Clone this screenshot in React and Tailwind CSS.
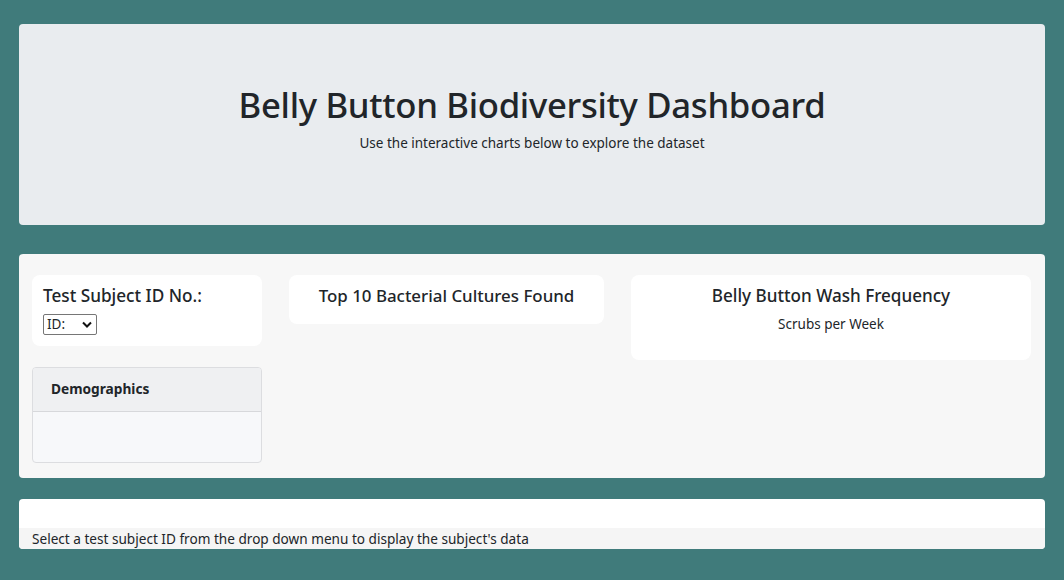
import React from "react";

export default function App() {
  const font = { fontFamily: '"Noto Sans", "Open Sans", sans-serif' };
  return (
    <div className="min-h-[580px] w-full bg-[#407b7b] pt-[24px] px-[19px] pb-[31px] text-[#212529]" style={font}>
      <div className="h-[201px] rounded bg-[#e9ecef] flex flex-col items-center pt-[59px]">
        <h1 className="text-[34.7px] leading-[44px] font-medium tracking-[-0.3px]">Belly Button Biodiversity Dashboard</h1>
        <p className="text-[13.5px] leading-[20px] mt-[6px]">Use the interactive charts below to explore the dataset</p>
      </div>

      <div className="mt-[29px] h-[224px] rounded bg-[#f7f7f7] pt-[21px] pl-[13px] pr-[14px] flex gap-[27px]">
        <div className="w-[230px] flex flex-col gap-[21px]">
          <div className="h-[71px] rounded-lg bg-white px-[11px] pt-[10px]">
            <div className="text-[17.2px] leading-[22px] font-medium">Test Subject ID No.:</div>
            <div className="mt-[7px] w-[54px] h-[21px] border border-[#767676] rounded-[2px] bg-white flex items-center justify-between pl-[3px] pr-[4px]">
              <span className="text-[13.5px] leading-none">ID:</span>
              <svg width="10" height="7" viewBox="0 0 10 7"><path d="M1 1.5 L5 5.5 L9 1.5" stroke="#111" strokeWidth="2" fill="none" /></svg>
            </div>
          </div>
          <div className="h-[96px] rounded border border-[#dcdde0] bg-[#f7f8fa] overflow-hidden">
            <div className="h-[44px] bg-[#eff0f2] border-b border-[#d7d8db] flex items-center pl-[18px]">
              <span className="text-[13.7px] font-bold">Demographics</span>
            </div>
          </div>
        </div>

        <div className="w-[315px]">
          <div className="h-[49px] rounded-lg bg-white flex justify-center pt-[10px]">
            <div className="text-[16.9px] leading-[22px] font-medium">Top 10 Bacterial Cultures Found</div>
          </div>
        </div>

        <div className="w-[400px]">
          <div className="h-[85px] rounded-lg bg-white flex flex-col items-center pt-[10px]">
            <div className="text-[17.1px] leading-[22px] font-medium">Belly Button Wash Frequency</div>
            <div className="text-[13.5px] leading-[18px] mt-[8px]">Scrubs per Week</div>
          </div>
        </div>
      </div>

      <div className="mt-[21px] h-[50px] rounded bg-white overflow-hidden flex flex-col">
        <div className="h-[29px]"></div>
        <div className="h-[21px] bg-[#f5f5f5] pl-[13px] text-[13.6px] leading-[21px]">Select a test subject ID from the drop down menu to display the subject's data</div>
      </div>
    </div>
  );
}
